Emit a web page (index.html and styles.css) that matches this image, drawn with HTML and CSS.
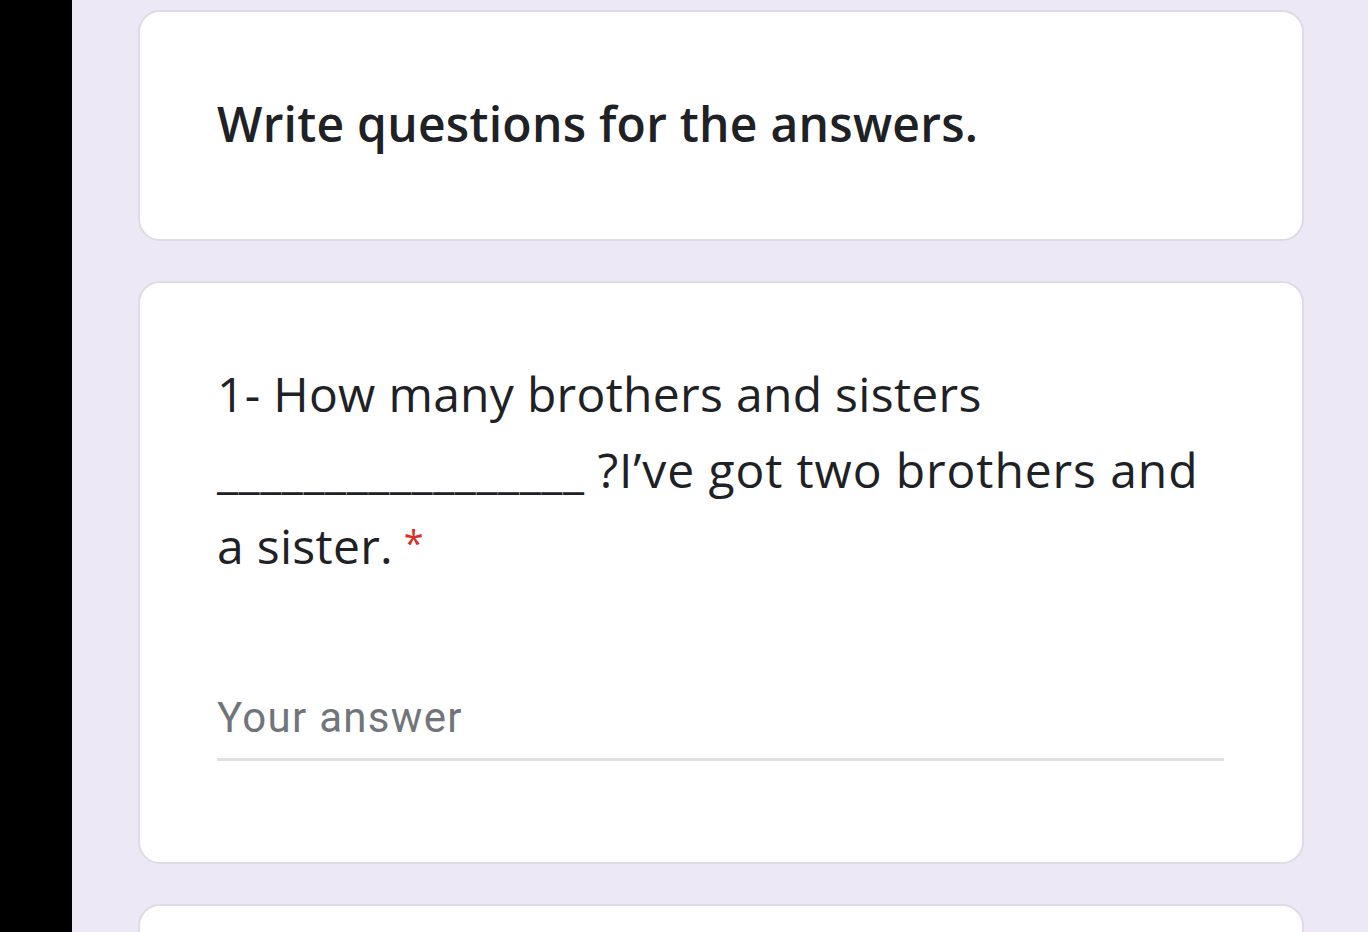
FILE: index.html
```html
<!DOCTYPE html>
<html lang="en">
<head>
<meta charset="utf-8">
<title>Form</title>
<link rel="stylesheet" href="styles.css">
</head>
<body>
<div class="screen">
  <div class="sidebar"></div>
  <main class="main">
    <section class="card card-header">
      <h1 class="title">Write questions for the answers.</h1>
    </section>
    <section class="card card-question">
      <div class="question">1- How many brothers and sisters <span class="blank">_________________</span> <span class="tail">?I’ve got two brothers and</span> a&nbsp;sister.&nbsp;<span class="req">*</span></div>
      <div class="answer">Your answer</div>
    </section>
    <section class="card card-next"></section>
  </main>
</div>
</body>
</html>
```
FILE: styles.css
```css
html, body {
  margin: 0;
  padding: 0;
  height: 100%;
  overflow: hidden;
}
body {
  background: #ece8f6;
  font-family: "Open Sans", "Noto Sans", sans-serif;
}
.screen {
  display: flex;
  height: 932px;
}
.sidebar {
  width: 72px;
  flex: none;
  background: #000;
}
.main {
  flex: 1;
  display: flex;
  flex-direction: column;
  gap: 40px;
  padding: 10px 0 0 66px;
}
.card {
  width: 1166px;
  box-sizing: border-box;
  background: #fff;
  border: 2px solid #dddbe3;
  border-radius: 22px;
  padding: 0 78px 0 77px;
  flex: none;
}
.card-header {
  height: 231px;
  padding-top: 82px;
}
.title {
  margin: 0;
  font-size: 48px;
  line-height: 60px;
  font-weight: 600;
  letter-spacing: 0.25px;
  color: #202124;
}
.card-question {
  height: 583px;
  padding-top: 73px;
}
.question {
  font-size: 48px;
  line-height: 76px;
  font-weight: 400;
  letter-spacing: 0.3px;
  color: #202124;
}
.blank {
  letter-spacing: 0.6px;
}
.tail {
  letter-spacing: 0.9px;
}
.req {
  display: inline-block;
  margin-left: -2px;
  color: #d93025;
  font-size: 36px;
  line-height: 20px;
  vertical-align: 8px;
}
.answer {
  margin-top: 110px;
  font-family: Roboto, "Open Sans", sans-serif;
  font-size: 42px;
  line-height: 48px;
  letter-spacing: 1.3px;
  color: #70757a;
  padding-bottom: 16px;
  border-bottom: 3px solid #e0e0e0;
}
.card-next {
  height: 100px;
}
```
